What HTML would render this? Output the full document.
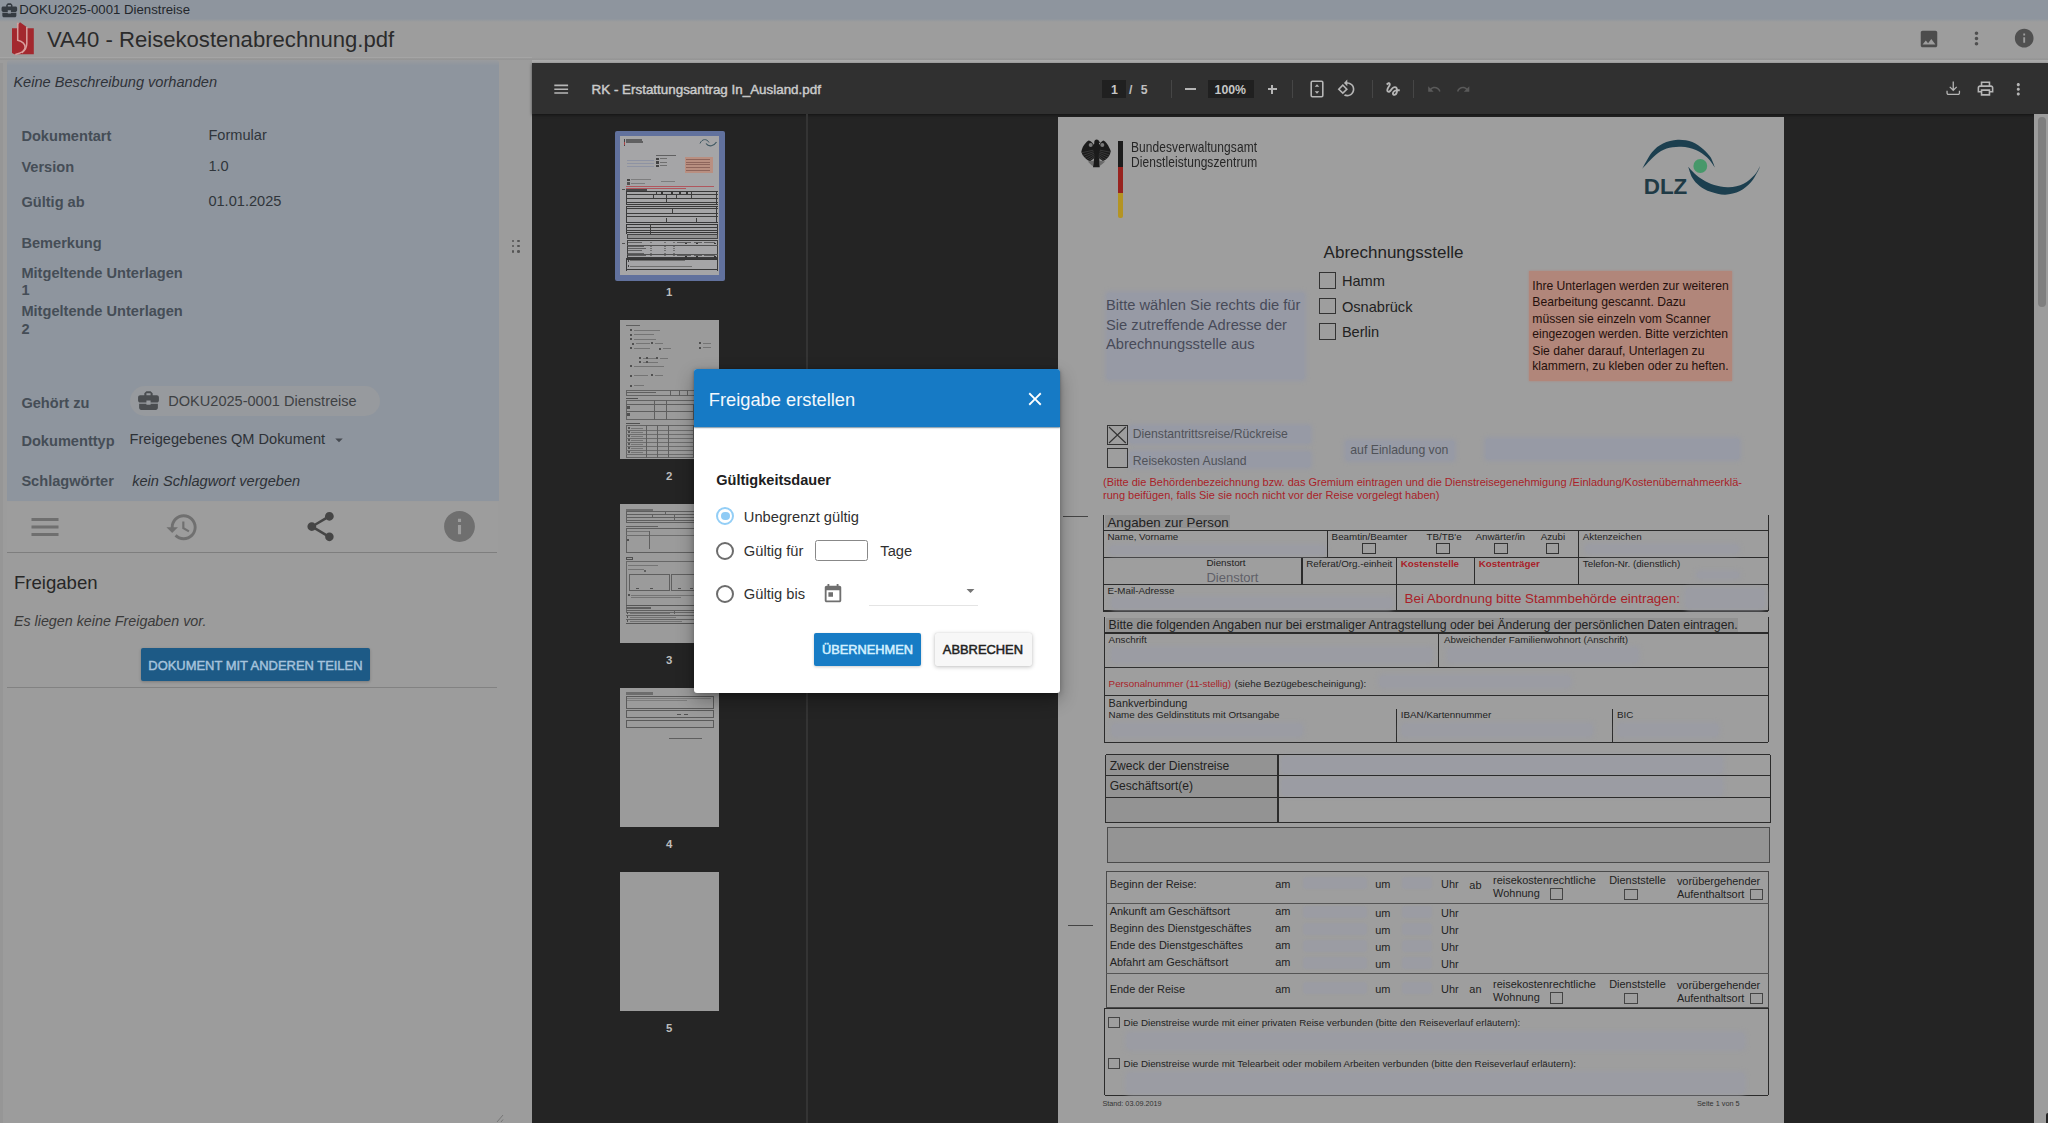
<!DOCTYPE html>
<html lang="de"><head><meta charset="utf-8"><title>VA40 - Reisekostenabrechnung.pdf</title>
<style>
html,body{margin:0;padding:0;}
body{width:2048px;height:1123px;overflow:hidden;position:relative;background:#9e9e9e;font-family:"Liberation Sans",sans-serif;}
.r{position:absolute;display:block;}
.t{position:absolute;white-space:nowrap;line-height:1;}
</style></head><body>

<!-- app chrome -->
<div class="r" style="left:0.0px;top:0.0px;width:2048.0px;height:22.0px;background:linear-gradient(#8e959e 0,#8e959e 18.800px,#9d9d9d 22px);"></div>
<svg class="r" style="left:-0.4px;top:0.6px;" width="18.7" height="18.7" viewBox="0 0 24 24"><path d="M10 16v-1H3.01L3 19c0 1.11.89 2 2 2h14c1.11 0 2-.89 2-2v-4h-7v1h-4zm10-9h-4.01V5l-2-2h-4l-2 2v2H4c-1.1 0-2 .9-2 2v3c0 1.11.89 2 2 2h6v-2h4v2h6c1.1 0 2-.9 2-2V9c0-1.1-.9-2-2-2zm-6 0h-4V5h4v2z" fill="#353b42"/></svg>
<div class="t" style="left:19.2px;top:3px;font-size:13.2px;color:#23272c;">DOKU2025-0001 Dienstreise</div>
<div class="r" style="left:0.0px;top:22.0px;width:2048.0px;height:38.0px;background:#9d9d9d;"></div>
<div class="r" style="left:532.0px;top:59.8px;width:1516.0px;height:3.2px;background:#acacac;"></div>
<div class="r" style="left:0.0px;top:57.4px;width:532.0px;height:1.1px;background:#a5a5a5;"></div>
<div class="r" style="left:0.0px;top:60.0px;width:532.0px;height:3.0px;background:#9c9c9c;"></div>
<div class="r" style="left:0.0px;top:58.4px;width:2048.0px;height:1.5px;background:linear-gradient(#9a9a9a,#949494);"></div>
<svg class="r" style="left:10px;top:20px" width="26" height="37" viewBox="10 20 26 37">
<path d="M12 28.200H18.200V24.600L20 22.300L26.300 26.800V28.200H33.800V54.200H14.500L12 53.100Z" fill="#a3282e"/>
<path d="M17.700 22.800V40.300C22.300 41.600 25.100 44 25.100 47.300C25.100 50.800 21 53.300 15.300 54.500" fill="none" stroke="#d9a09e" stroke-width="1.500"/>
<path d="M26.800 27V43.500C26.800 47.500 25 50.500 21.800 52.800" fill="none" stroke="#d9a09e" stroke-width="1.500"/>
</svg>
<div class="t" style="left:47.0px;top:29px;font-size:22.1px;color:#2b2b2b;">VA40 - Reisekostenabrechnung.pdf</div>
<svg class="r" style="left:1918.3px;top:27.5px;" width="22" height="22" viewBox="0 0 24 24"><path d="M21 19V5c0-1.1-.9-2-2-2H5c-1.1 0-2 .9-2 2v14c0 1.1.9 2 2 2h14c1.1 0 2-.9 2-2zM8.5 13.5l2.5 3.01L14.5 12l4.5 6H5l3.5-4.5z" fill="#4c4c4c"/></svg>
<svg class="r" style="left:1966.0px;top:28.0px;" width="21" height="21" viewBox="0 0 24 24"><path d="M12 8c1.1 0 2-.9 2-2s-.9-2-2-2-2 .9-2 2 .9 2 2 2zm0 2c-1.1 0-2 .9-2 2s.9 2 2 2 2-.9 2-2-.9-2-2-2zm0 6c-1.1 0-2 .9-2 2s.9 2 2 2 2-.9 2-2-.9-2-2-2z" fill="#4f4f4f"/></svg>
<svg class="r" style="left:2013.0px;top:27.3px;" width="22.4" height="22.4" viewBox="0 0 24 24"><path d="M12 2C6.48 2 2 6.48 2 12s4.48 10 10 10 10-4.48 10-10S17.52 2 12 2zm1 15h-2v-6h2v6zm0-8h-2V7h2v2z" fill="#505050"/></svg>
<!-- left panel -->
<div class="r" style="left:0.0px;top:63.0px;width:532.0px;height:1060.0px;background:#9c9c9c;"></div>
<div class="r" style="left:0.0px;top:63.0px;width:3.0px;height:1060.0px;background:#969696;"></div>
<div class="r" style="left:498.0px;top:63.0px;width:34.0px;height:1060.0px;background:#9c9c9c;"></div>
<div class="r" style="left:7.0px;top:60.4px;width:491.5px;height:441.1px;background:linear-gradient(#999b9e 0,#8e959e 5.500px);border-radius:3px 3px 0 0;"></div>
<div class="t" style="left:13.4px;top:75px;font-size:14.6px;color:#2e3238;font-style:italic;">Keine Beschreibung vorhanden</div>
<div class="t" style="left:21.4px;top:129px;font-size:14.6px;color:#454d56;font-weight:700;">Dokumentart</div>
<div class="t" style="left:208.4px;top:128px;font-size:14.6px;color:#30353b;">Formular</div>
<div class="t" style="left:21.4px;top:160px;font-size:14.6px;color:#454d56;font-weight:700;">Version</div>
<div class="t" style="left:208.4px;top:159px;font-size:14.6px;color:#30353b;">1.0</div>
<div class="t" style="left:21.4px;top:195px;font-size:14.6px;color:#454d56;font-weight:700;">Gültig ab</div>
<div class="t" style="left:208.4px;top:194px;font-size:14.6px;color:#30353b;">01.01.2025</div>
<div class="t" style="left:21.4px;top:236px;font-size:14.6px;color:#454d56;font-weight:700;">Bemerkung</div>
<div class="t" style="left:21.4px;top:266px;font-size:14.6px;color:#454d56;font-weight:700;">Mitgeltende Unterlagen</div>
<div class="t" style="left:21.4px;top:283px;font-size:14.6px;color:#454d56;font-weight:700;">1</div>
<div class="t" style="left:21.4px;top:304px;font-size:14.6px;color:#454d56;font-weight:700;">Mitgeltende Unterlagen</div>
<div class="t" style="left:21.4px;top:322px;font-size:14.6px;color:#454d56;font-weight:700;">2</div>
<div class="t" style="left:21.4px;top:396px;font-size:14.6px;color:#454d56;font-weight:700;">Gehört zu</div>
<div class="r" style="left:130.0px;top:386.0px;width:249.5px;height:29.5px;background:#979a9e;border-radius:15px;"></div>
<svg class="r" style="left:135.5px;top:388.0px;" width="25" height="25" viewBox="0 0 24 24"><path d="M10 16v-1H3.01L3 19c0 1.11.89 2 2 2h14c1.11 0 2-.89 2-2v-4h-7v1h-4zm10-9h-4.01V5l-2-2h-4l-2 2v2H4c-1.1 0-2 .9-2 2v3c0 1.11.89 2 2 2h6v-2h4v2h6c1.1 0 2-.9 2-2V9c0-1.1-.9-2-2-2zm-6 0h-4V5h4v2z" fill="#4a4d50"/></svg>
<div class="t" style="left:168.3px;top:394px;font-size:14.55px;color:#3e4144;">DOKU2025-0001 Dienstreise</div>
<div class="t" style="left:21.4px;top:434px;font-size:14.6px;color:#454d56;font-weight:700;">Dokumenttyp</div>
<div class="t" style="left:129.6px;top:432px;font-size:14.6px;color:#2d3136;">Freigegebenes QM Dokument</div>
<svg class="r" style="left:329.6px;top:431.4px;" width="18" height="18" viewBox="0 0 24 24"><path d="M7 10l5 5 5-5z" fill="#464b51"/></svg>
<div class="t" style="left:21.4px;top:474px;font-size:14.6px;color:#454d56;font-weight:700;">Schlagwörter</div>
<div class="t" style="left:132.2px;top:474px;font-size:14.6px;color:#2d3136;font-style:italic;">kein Schlagwort vergeben</div>
<div class="r" style="left:7.0px;top:501.5px;width:491.0px;height:50.5px;background:#9d9d9d;"></div>
<svg class="r" style="left:27.0px;top:508.5px;" width="36" height="36" viewBox="0 0 24 24"><path d="M3 18h18v-2H3v2zm0-5h18v-2H3v2zm0-7v2h18V6H3z" fill="#6f6f6f"/></svg>
<svg class="r" style="left:165.3px;top:509.5px;" width="34.5" height="34.5" viewBox="0 0 24 24"><path d="M13 3c-4.97 0-9 4.03-9 9H1l3.89 3.89.07.14L9 12H6c0-3.87 3.13-7 7-7s7 3.13 7 7-3.13 7-7 7c-1.93 0-3.68-.79-4.94-2.06l-1.42 1.42C8.27 19.99 10.51 21 13 21c4.97 0 9-4.03 9-9s-4.03-9-9-9zm-1 5v5l4.28 2.54.72-1.21-3.5-2.08V8H12z" fill="#707070"/></svg>
<svg class="r" style="left:303.4px;top:509.2px;" width="35.2" height="35.2" viewBox="0 0 24 24"><path d="M18 16.08c-.76 0-1.44.3-1.96.77L8.91 12.7c.05-.23.09-.46.09-.7s-.04-.47-.09-.7l7.05-4.11c.54.5 1.25.81 2.04.81 1.66 0 3-1.34 3-3s-1.34-3-3-3-3 1.34-3 3c0 .24.04.47.09.7L8.04 9.81C7.5 9.31 6.79 9 6 9c-1.66 0-3 1.34-3 3s1.34 3 3 3c.79 0 1.5-.31 2.04-.81l7.12 4.16c-.05.21-.08.43-.08.65 0 1.61 1.31 2.92 2.92 2.92 1.61 0 2.92-1.31 2.92-2.92s-1.31-2.92-2.92-2.92z" fill="#454545"/></svg>
<svg class="r" style="left:440.5px;top:508.4px;" width="37" height="37" viewBox="0 0 24 24"><path d="M12 2C6.48 2 2 6.48 2 12s4.48 10 10 10 10-4.48 10-10S17.52 2 12 2zm1 15h-2v-6h2v6zm0-8h-2V7h2v2z" fill="#6f6f6f"/></svg>
<div class="r" style="left:7.0px;top:551.8px;width:489.5px;height:1.6px;background:#7e7e7e;"></div>
<div class="r" style="left:7.0px;top:553.4px;width:491.0px;height:133.0px;background:#9c9c9c;"></div>
<div class="t" style="left:13.9px;top:574px;font-size:18.6px;color:#272727;">Freigaben</div>
<div class="t" style="left:13.9px;top:614px;font-size:14.3px;color:#3a3a3a;font-style:italic;">Es liegen keine Freigaben vor.</div>
<div class="r" style="left:141.0px;top:648.2px;width:229.3px;height:32.6px;background:#1d5a86;border-radius:2px;box-shadow:0 1px 3px rgba(0,0,0,.22);"></div>
<div class="t" style="left:148.3px;top:660px;font-size:12.95px;color:#a6c3dc;-webkit-text-stroke:0.45px #a6c3dc;">DOKUMENT MIT ANDEREN TEILEN</div>
<div class="r" style="left:7.0px;top:686.7px;width:489.5px;height:1.7px;background:#828282;"></div>
<div class="r" style="left:511.6px;top:239.6px;width:2.7px;height:2.7px;background:#555;border-radius:50%;"></div>
<div class="r" style="left:516.9px;top:239.6px;width:2.7px;height:2.7px;background:#555;border-radius:50%;"></div>
<div class="r" style="left:511.6px;top:244.8px;width:2.7px;height:2.7px;background:#555;border-radius:50%;"></div>
<div class="r" style="left:516.9px;top:244.8px;width:2.7px;height:2.7px;background:#555;border-radius:50%;"></div>
<div class="r" style="left:511.6px;top:250.0px;width:2.7px;height:2.7px;background:#555;border-radius:50%;"></div>
<div class="r" style="left:516.9px;top:250.0px;width:2.7px;height:2.7px;background:#555;border-radius:50%;"></div>
<svg class="r" style="left:494px;top:1112px" width="12" height="11" viewBox="0 0 12 11"><path d="M3 10L9 3M7 10L9 7.500" stroke="#777" stroke-width="1" fill="none"/></svg>
<!-- pdf viewer shell -->
<div class="r" style="left:532.0px;top:63.0px;width:1516.0px;height:1060.0px;background:#242424;"></div>
<div class="r" style="left:532.0px;top:63.0px;width:1516.0px;height:51.0px;background:#303030;box-shadow:0 1px 3px rgba(0,0,0,.5);"></div>
<svg class="r" style="left:552.2px;top:79.5px;" width="18.4" height="18.4" viewBox="0 0 24 24"><path d="M3 18h18v-2H3v2zm0-5h18v-2H3v2zm0-7v2h18V6H3z" fill="#b6b6b6"/></svg>
<div class="t" style="left:591.6px;top:83px;font-size:13.4px;color:#cbcbcb;-webkit-text-stroke:0.45px #cbcbcb;">RK - Erstattungsantrag In_Ausland.pdf</div>
<div class="r" style="left:1102.0px;top:80.2px;width:24.3px;height:17.6px;background:#202020;"></div>
<div class="t" style="left:1111.0px;top:84px;font-size:12.3px;color:#c6c6c6;font-weight:700;">1</div>
<div class="t" style="left:1129.0px;top:84px;font-size:12.3px;color:#c0c0c0;font-weight:700;">/</div>
<div class="t" style="left:1140.8px;top:84px;font-size:12.3px;color:#c0c0c0;font-weight:700;">5</div>
<div class="r" style="left:1171.0px;top:80.0px;width:1.0px;height:18.0px;background:#464646;"></div>
<div class="r" style="left:1185.0px;top:88.3px;width:10.5px;height:1.8px;background:#b5b5b5;"></div>
<div class="r" style="left:1208.4px;top:80.2px;width:46.0px;height:17.6px;background:#202020;"></div>
<div class="t" style="left:1214.6px;top:84px;font-size:12.3px;color:#c6c6c6;font-weight:700;">100%</div>
<div class="r" style="left:1267.6px;top:88.3px;width:9.4px;height:1.8px;background:#b5b5b5;"></div>
<div class="r" style="left:1271.4px;top:84.5px;width:1.8px;height:9.4px;background:#b5b5b5;"></div>
<div class="r" style="left:1292.0px;top:80.0px;width:1.0px;height:18.0px;background:#464646;"></div>
<svg class="r" style="left:1309px;top:80px" width="16" height="18" viewBox="0 0 16 18"><rect x="2.200" y="1.300" width="11.600" height="15.400" rx="1.200" fill="none" stroke="#b6b6b6" stroke-width="1.600"/><path d="M8 4.200l2.300 2.600H5.700zM8 13.800l2.300-2.600H5.700z" fill="#b6b6b6"/></svg>
<svg class="r" style="left:1337.0px;top:79.2px;" width="19" height="19" viewBox="0 0 24 24"><path d="M7.34 6.41L.86 12.9l6.49 6.48 6.49-6.48-6.5-6.49zM3.69 12.9l3.66-3.66L11 12.9l-3.66 3.66-3.65-3.66zm15.67-6.26C17.61 4.88 15.3 4 13 4V.76L8.76 5 13 9.24V6c1.79 0 3.58.68 4.95 2.05 2.73 2.73 2.73 7.17 0 9.9C16.58 19.32 14.79 20 13 20c-.97 0-1.94-.21-2.84-.61l-1.49 1.49C10.02 21.62 11.51 22 13 22c2.3 0 4.61-.88 6.36-2.64 3.52-3.51 3.52-9.21 0-12.72z" fill="#b6b6b6"/></svg>
<div class="r" style="left:1372.0px;top:80.0px;width:1.0px;height:18.0px;background:#464646;"></div>
<svg class="r" style="left:1383.5px;top:79.6px;" width="18" height="18" viewBox="0 0 24 24"><path d="M4.59 6.89c.7-.71 1.4-1.35 1.71-1.22.5.2 0 1.03-.3 1.52-.25.42-2.86 3.89-2.86 6.31 0 1.28.48 2.34 1.34 2.98.75.56 1.74.73 2.64.46 1.07-.31 1.95-1.4 3.06-2.77 1.21-1.49 2.83-3.44 4.08-3.44 1.63 0 1.65 1.01 1.76 1.79-3.78.64-5.38 3.67-5.38 5.37 0 1.7 1.44 3.09 3.21 3.09 1.63 0 4.29-1.33 4.69-6.1H21v-2.5h-2.47c-.15-1.65-1.09-4.2-4.03-4.2-2.25 0-4.18 1.91-4.94 2.84-.58.73-2.06 2.48-2.29 2.72-.25.3-.68.84-1.11.84-.45 0-.72-.83-.36-1.92.35-1.09 1.4-2.86 1.85-3.52.78-1.14 1.3-1.92 1.3-3.28C8.95 3.69 7.31 3 6.44 3 5.12 3 3.97 4 3.72 4.25c-.36.36-.66.66-.88.93l1.75 1.71zm9.29 11.66c-.31 0-.74-.26-.74-.72 0-.6.73-2.2 2.87-2.76-.3 2.69-1.43 3.48-2.13 3.48z" fill="#b6b6b6"/></svg>
<div class="r" style="left:1413.3px;top:80.0px;width:1.0px;height:18.0px;background:#464646;"></div>
<svg class="r" style="left:1427.4px;top:82.0px;" width="14.5" height="14.5" viewBox="0 0 24 24"><path d="M12.5 8c-2.65 0-5.05.99-6.9 2.6L2 7v9h9l-3.62-3.62c1.39-1.16 3.16-1.88 5.12-1.88 3.54 0 6.55 2.31 7.6 5.5l2.37-.78C21.08 11.03 17.15 8 12.5 8z" fill="#5a5a5a"/></svg>
<svg class="r" style="left:1456.4px;top:82.0px;" width="14.5" height="14.5" viewBox="0 0 24 24"><path d="M18.4 10.6C16.55 8.99 14.15 8 11.5 8c-4.65 0-8.58 3.03-9.96 7.22L3.9 16c1.05-3.19 4.05-5.5 7.6-5.5 1.95 0 3.73.72 5.12 1.88L13 16h9V7l-3.6 3.6z" fill="#5a5a5a"/></svg>
<svg class="r" style="left:1942.6px;top:78.2px;" width="20.5" height="20.5" viewBox="0 0 24 24"><path d="M12 15.575l-4.6-4.6 1.05-1.05L11.250 12.700V4h1.500v8.700l2.800-2.775 1.050 1.050zM6.300 20q-.950 0-1.625-.675T4 17.700V15h1.500v2.700q0 .300.250.550t.550.250h11.400q.300 0 .550-.250t.250-.550V15H20v2.700q0 .950-.675 1.625T17.700 20z" fill="#b6b6b6"/></svg>
<svg class="r" style="left:1976.2px;top:79.2px;" width="19" height="19" viewBox="0 0 24 24"><path d="M19 8h-1V3H6v5H5c-1.66 0-3 1.34-3 3v6h4v4h12v-4h4v-6c0-1.66-1.34-3-3-3zM8 5h8v3H8V5zm8 12v2H8v-4h8v2zm2-2v-2H6v2H4v-4c0-.55.45-1 1-1h14c.55 0 1 .45 1 1v4h-2z" fill="#b6b6b6"/></svg>
<svg class="r" style="left:2009.4px;top:79.5px;" width="18.6" height="18.6" viewBox="0 0 24 24"><path d="M12 8c1.1 0 2-.9 2-2s-.9-2-2-2-2 .9-2 2 .9 2 2 2zm0 2c-1.1 0-2 .9-2 2s.9 2 2 2 2-.9 2-2-.9-2-2-2zm0 6c-1.1 0-2 .9-2 2s.9 2 2 2 2-.9 2-2-.9-2-2-2z" fill="#b6b6b6"/></svg>
<div class="r" style="left:806.3px;top:114.0px;width:1.4px;height:1009.0px;background:#343434;"></div>
<div class="r" style="left:2033.6px;top:114.0px;width:14.4px;height:1009.0px;background:#9c9c9c;"></div>
<div class="r" style="left:2037.8px;top:117.0px;width:8.0px;height:189.6px;background:#7f7f7f;border-radius:4px;"></div>
<div class="r" style="left:2046.0px;top:1113.0px;width:2.0px;height:10.0px;background:#242424;border-radius:10px 0 0 0;"></div>
<!-- thumbnails -->
<div class="r" style="left:614.5px;top:130.7px;width:110.3px;height:150.0px;background:#61719d;border-radius:2px;"></div>
<div class="r" style="left:620.0px;top:136.2px;width:99.4px;height:139.0px;background:#a5a5a7;"></div>
<div class="t" style="left:666.1px;top:287px;font-size:11.4px;color:#bdbdbd;font-weight:700;">1</div>
<div class="r" style="left:620.0px;top:320.0px;width:99.4px;height:139.0px;background:#9b9b9b;"></div>
<div class="t" style="left:666.1px;top:471px;font-size:11.4px;color:#bdbdbd;font-weight:700;">2</div>
<div class="r" style="left:620.0px;top:503.7px;width:99.4px;height:139.0px;background:#9b9b9b;"></div>
<div class="t" style="left:666.1px;top:655px;font-size:11.4px;color:#bdbdbd;font-weight:700;">3</div>
<div class="r" style="left:620.0px;top:687.7px;width:99.4px;height:139.0px;background:#9b9b9b;"></div>
<div class="t" style="left:666.1px;top:839px;font-size:11.4px;color:#bdbdbd;font-weight:700;">4</div>
<div class="r" style="left:620.0px;top:871.6px;width:99.4px;height:139.0px;background:#9b9b9b;"></div>
<div class="t" style="left:666.1px;top:1023px;font-size:11.4px;color:#bdbdbd;font-weight:700;">5</div>
<div class="r" style="left:0;top:0;width:2048px;height:1123px;filter:blur(.5px);opacity:.85">
<div class="r" style="left:623.5px;top:139.0px;width:1.5px;height:7.0px;background:#333;"></div>
<div class="r" style="left:623.5px;top:142.2px;width:1.5px;height:3.0px;background:#a33;"></div>
<div class="r" style="left:626.0px;top:139.4px;width:16.0px;height:1.2px;background:#555;"></div>
<div class="r" style="left:626.0px;top:141.4px;width:17.0px;height:1.2px;background:#555;"></div>
<svg class="r" style="left:699px;top:138.2px" width="18" height="10" viewBox="0 0 18 10"><path d="M1 5.500C3 0.500 8 0.500 10 4.500" stroke="#2d4a55" stroke-width="1" fill="none"/><path d="M7 5.500C10 9.500 15 8 17.500 4" stroke="#2d4a55" stroke-width="1.200" fill="none"/></svg>
<div class="r" style="left:656.0px;top:154.7px;width:20.0px;height:1.1px;background:#555;"></div>
<div class="r" style="left:656.0px;top:157.7px;width:2.5px;height:2.5px;background:#333;"></div>
<div class="r" style="left:659.5px;top:158.2px;width:7.0px;height:1.0px;background:#666;"></div>
<div class="r" style="left:656.0px;top:161.2px;width:2.5px;height:2.5px;background:#333;"></div>
<div class="r" style="left:659.5px;top:161.7px;width:7.0px;height:1.0px;background:#666;"></div>
<div class="r" style="left:656.0px;top:164.7px;width:2.5px;height:2.5px;background:#333;"></div>
<div class="r" style="left:659.5px;top:165.2px;width:7.0px;height:1.0px;background:#666;"></div>
<div class="r" style="left:627.0px;top:160.2px;width:27.0px;height:1.2px;background:#8a90a3;"></div>
<div class="r" style="left:627.0px;top:163.0px;width:27.0px;height:1.2px;background:#8a90a3;"></div>
<div class="r" style="left:627.0px;top:165.8px;width:27.0px;height:1.2px;background:#8a90a3;"></div>
<div class="r" style="left:684.5px;top:157.2px;width:28.0px;height:15.5px;background:#bd8c7b;"></div>
<div class="r" style="left:686.0px;top:159.2px;width:24.0px;height:0.9px;background:#8a5a50;"></div>
<div class="r" style="left:686.0px;top:161.8px;width:24.0px;height:0.9px;background:#8a5a50;"></div>
<div class="r" style="left:686.0px;top:164.4px;width:24.0px;height:0.9px;background:#8a5a50;"></div>
<div class="r" style="left:686.0px;top:167.0px;width:24.0px;height:0.9px;background:#8a5a50;"></div>
<div class="r" style="left:686.0px;top:169.6px;width:24.0px;height:0.9px;background:#8a5a50;"></div>
<div class="r" style="left:627.0px;top:178.7px;width:3.0px;height:2.8px;background:#333;"></div>
<div class="r" style="left:627.0px;top:182.0px;width:3.0px;height:2.8px;background:#444;"></div>
<div class="r" style="left:631.0px;top:179.2px;width:20.0px;height:1.0px;background:#777;"></div>
<div class="r" style="left:631.0px;top:182.7px;width:14.0px;height:1.0px;background:#777;"></div>
<div class="r" style="left:661.0px;top:181.0px;width:14.0px;height:1.0px;background:#777;"></div>
<div class="r" style="left:626.0px;top:186.2px;width:88.0px;height:0.9px;background:#b34a52;"></div>
<div class="r" style="left:626.0px;top:188.0px;width:60.0px;height:0.9px;background:#b34a52;"></div>
<div class="r" style="left:622.0px;top:189.0px;width:3.0px;height:0.8px;background:#444;"></div>
<div class="r" style="left:622.0px;top:243.2px;width:3.0px;height:0.8px;background:#444;"></div>
<div class="r" style="left:626.0px;top:189.2px;width:21.0px;height:1.5px;background:#3a3a3a;"></div>
<div class="r" style="left:626.0px;top:190.7px;width:91.5px;height:1.1px;background:#262626;"></div>
<div class="r" style="left:626.0px;top:203.6px;width:91.5px;height:1.1px;background:#262626;"></div>
<div class="r" style="left:626.0px;top:190.7px;width:1.1px;height:14.3px;background:#262626;"></div>
<div class="r" style="left:716.4px;top:190.7px;width:1.1px;height:14.3px;background:#262626;"></div>
<div class="r" style="left:626.0px;top:194.3px;width:91.5px;height:1.0px;background:#2a2a2a;"></div>
<div class="r" style="left:626.0px;top:197.9px;width:91.5px;height:1.0px;background:#2a2a2a;"></div>
<div class="r" style="left:626.0px;top:201.5px;width:91.5px;height:1.0px;background:#2a2a2a;"></div>
<div class="r" style="left:656.0px;top:190.7px;width:1.0px;height:4.0px;background:#2a2a2a;"></div>
<div class="r" style="left:691.0px;top:190.7px;width:1.0px;height:7.5px;background:#2a2a2a;"></div>
<div class="r" style="left:653.0px;top:194.6px;width:1.0px;height:3.5px;background:#2a2a2a;"></div>
<div class="r" style="left:666.0px;top:194.6px;width:1.0px;height:7.0px;background:#2a2a2a;"></div>
<div class="r" style="left:676.0px;top:194.6px;width:1.0px;height:3.5px;background:#2a2a2a;"></div>
<div class="r" style="left:661.0px;top:192.0px;width:2.0px;height:2.0px;background:#222;"></div>
<div class="r" style="left:671.0px;top:192.0px;width:2.0px;height:2.0px;background:#222;"></div>
<div class="r" style="left:679.0px;top:192.0px;width:2.0px;height:2.0px;background:#222;"></div>
<div class="r" style="left:686.0px;top:192.0px;width:2.0px;height:2.0px;background:#222;"></div>
<div class="r" style="left:626.0px;top:203.9px;width:91.5px;height:1.2px;background:#2a2a2a;"></div>
<div class="r" style="left:626.0px;top:205.9px;width:91.5px;height:1.1px;background:#262626;"></div>
<div class="r" style="left:626.0px;top:221.9px;width:91.5px;height:1.1px;background:#262626;"></div>
<div class="r" style="left:626.0px;top:205.9px;width:1.1px;height:17.5px;background:#262626;"></div>
<div class="r" style="left:716.4px;top:205.9px;width:1.1px;height:17.5px;background:#262626;"></div>
<div class="r" style="left:626.0px;top:208.0px;width:91.5px;height:0.9px;background:#2a2a2a;"></div>
<div class="r" style="left:626.0px;top:212.6px;width:91.5px;height:1.0px;background:#2a2a2a;"></div>
<div class="r" style="left:626.0px;top:216.3px;width:91.5px;height:1.0px;background:#2a2a2a;"></div>
<div class="r" style="left:672.0px;top:208.0px;width:1.0px;height:4.7px;background:#2a2a2a;"></div>
<div class="r" style="left:666.0px;top:217.6px;width:1.0px;height:5.5px;background:#2a2a2a;"></div>
<div class="r" style="left:695.5px;top:217.6px;width:1.0px;height:5.5px;background:#2a2a2a;"></div>
<div class="r" style="left:626.3px;top:224.3px;width:91.5px;height:1.2px;background:#222;"></div>
<div class="r" style="left:626.3px;top:232.3px;width:91.5px;height:1.2px;background:#222;"></div>
<div class="r" style="left:626.3px;top:224.3px;width:1.2px;height:9.4px;background:#222;"></div>
<div class="r" style="left:716.6px;top:224.3px;width:1.2px;height:9.4px;background:#222;"></div>
<div class="r" style="left:626.3px;top:227.1px;width:91.5px;height:1.0px;background:#2a2a2a;"></div>
<div class="r" style="left:626.3px;top:230.1px;width:91.5px;height:1.0px;background:#2a2a2a;"></div>
<div class="r" style="left:650.0px;top:224.3px;width:1.0px;height:9.4px;background:#2a2a2a;"></div>
<div class="r" style="left:626.5px;top:234.2px;width:91.0px;height:1.0px;background:#333;"></div>
<div class="r" style="left:626.5px;top:238.1px;width:91.0px;height:1.0px;background:#333;"></div>
<div class="r" style="left:626.5px;top:234.2px;width:1.0px;height:5.0px;background:#333;"></div>
<div class="r" style="left:716.5px;top:234.2px;width:1.0px;height:5.0px;background:#333;"></div>
<div class="r" style="left:627.5px;top:235.1px;width:89.0px;height:3.0px;background:#8e8e8e;"></div>
<div class="r" style="left:626.5px;top:240.1px;width:91.0px;height:1.0px;background:#2a2a2a;"></div>
<div class="r" style="left:626.5px;top:257.3px;width:91.0px;height:1.0px;background:#2a2a2a;"></div>
<div class="r" style="left:626.5px;top:240.1px;width:1.0px;height:18.5px;background:#2a2a2a;"></div>
<div class="r" style="left:716.5px;top:240.1px;width:1.0px;height:18.5px;background:#2a2a2a;"></div>
<div class="r" style="left:626.5px;top:244.5px;width:91.0px;height:0.8px;background:#444;"></div>
<div class="r" style="left:626.5px;top:253.9px;width:91.0px;height:0.8px;background:#444;"></div>
<div class="r" style="left:628.0px;top:241.6px;width:14.0px;height:0.9px;background:#555;"></div>
<div class="r" style="left:650.0px;top:241.6px;width:2.0px;height:0.9px;background:#666;"></div>
<div class="r" style="left:664.0px;top:241.6px;width:2.0px;height:0.9px;background:#666;"></div>
<div class="r" style="left:673.0px;top:241.6px;width:2.0px;height:0.9px;background:#666;"></div>
<div class="r" style="left:628.0px;top:245.7px;width:16.0px;height:0.9px;background:#555;"></div>
<div class="r" style="left:650.0px;top:245.7px;width:2.0px;height:0.9px;background:#666;"></div>
<div class="r" style="left:664.0px;top:245.7px;width:2.0px;height:0.9px;background:#666;"></div>
<div class="r" style="left:673.0px;top:245.7px;width:2.0px;height:0.9px;background:#666;"></div>
<div class="r" style="left:628.0px;top:248.1px;width:18.0px;height:0.9px;background:#555;"></div>
<div class="r" style="left:650.0px;top:248.1px;width:2.0px;height:0.9px;background:#666;"></div>
<div class="r" style="left:664.0px;top:248.1px;width:2.0px;height:0.9px;background:#666;"></div>
<div class="r" style="left:673.0px;top:248.1px;width:2.0px;height:0.9px;background:#666;"></div>
<div class="r" style="left:628.0px;top:250.4px;width:14.0px;height:0.9px;background:#555;"></div>
<div class="r" style="left:650.0px;top:250.4px;width:2.0px;height:0.9px;background:#666;"></div>
<div class="r" style="left:664.0px;top:250.4px;width:2.0px;height:0.9px;background:#666;"></div>
<div class="r" style="left:673.0px;top:250.4px;width:2.0px;height:0.9px;background:#666;"></div>
<div class="r" style="left:628.0px;top:252.7px;width:16.0px;height:0.9px;background:#555;"></div>
<div class="r" style="left:650.0px;top:252.7px;width:2.0px;height:0.9px;background:#666;"></div>
<div class="r" style="left:664.0px;top:252.7px;width:2.0px;height:0.9px;background:#666;"></div>
<div class="r" style="left:673.0px;top:252.7px;width:2.0px;height:0.9px;background:#666;"></div>
<div class="r" style="left:628.0px;top:255.3px;width:18.0px;height:0.9px;background:#555;"></div>
<div class="r" style="left:650.0px;top:255.3px;width:2.0px;height:0.9px;background:#666;"></div>
<div class="r" style="left:664.0px;top:255.3px;width:2.0px;height:0.9px;background:#666;"></div>
<div class="r" style="left:673.0px;top:255.3px;width:2.0px;height:0.9px;background:#666;"></div>
<div class="r" style="left:677.0px;top:241.6px;width:14.0px;height:0.8px;background:#555;"></div>
<div class="r" style="left:694.0px;top:241.6px;width:8.0px;height:0.8px;background:#555;"></div>
<div class="r" style="left:704.0px;top:241.6px;width:11.0px;height:0.8px;background:#555;"></div>
<div class="r" style="left:684.5px;top:242.6px;width:2.0px;height:1.8px;background:#222;"></div>
<div class="r" style="left:695.5px;top:242.6px;width:2.0px;height:1.8px;background:#222;"></div>
<div class="r" style="left:714.0px;top:242.6px;width:2.0px;height:1.8px;background:#222;"></div>
<div class="r" style="left:677.0px;top:254.8px;width:14.0px;height:0.8px;background:#555;"></div>
<div class="r" style="left:694.0px;top:254.8px;width:8.0px;height:0.8px;background:#555;"></div>
<div class="r" style="left:704.0px;top:254.8px;width:11.0px;height:0.8px;background:#555;"></div>
<div class="r" style="left:684.5px;top:255.8px;width:2.0px;height:1.8px;background:#222;"></div>
<div class="r" style="left:695.5px;top:255.8px;width:2.0px;height:1.8px;background:#222;"></div>
<div class="r" style="left:714.0px;top:255.8px;width:2.0px;height:1.8px;background:#222;"></div>
<div class="r" style="left:626.3px;top:258.3px;width:91.5px;height:1.3px;background:#222;"></div>
<div class="r" style="left:626.3px;top:258.3px;width:91.5px;height:1.1px;background:#262626;"></div>
<div class="r" style="left:626.3px;top:269.2px;width:91.5px;height:1.1px;background:#262626;"></div>
<div class="r" style="left:626.3px;top:258.3px;width:1.1px;height:12.3px;background:#262626;"></div>
<div class="r" style="left:716.7px;top:258.3px;width:1.1px;height:12.3px;background:#262626;"></div>
<div class="r" style="left:627.5px;top:260.0px;width:1.8px;height:1.8px;background:#333;"></div>
<div class="r" style="left:630.0px;top:260.4px;width:55.0px;height:0.9px;background:#666;"></div>
<div class="r" style="left:627.5px;top:265.4px;width:1.8px;height:1.8px;background:#333;"></div>
<div class="r" style="left:630.0px;top:265.8px;width:62.0px;height:0.9px;background:#666;"></div>
<div class="r" style="left:625.5px;top:324.5px;width:14.0px;height:0.9px;background:#555;"></div>
<div class="r" style="left:630.0px;top:329.0px;width:2.0px;height:2.0px;background:#444;"></div>
<div class="r" style="left:634.0px;top:329.5px;width:26.0px;height:0.9px;background:#6e6e6e;"></div>
<div class="r" style="left:630.0px;top:333.5px;width:2.0px;height:2.0px;background:#444;"></div>
<div class="r" style="left:634.0px;top:334.0px;width:20.0px;height:0.9px;background:#6e6e6e;"></div>
<div class="r" style="left:630.0px;top:338.0px;width:2.0px;height:2.0px;background:#444;"></div>
<div class="r" style="left:634.0px;top:338.5px;width:22.0px;height:0.9px;background:#6e6e6e;"></div>
<div class="r" style="left:632.0px;top:342.5px;width:2.0px;height:2.0px;background:#444;"></div>
<div class="r" style="left:636.0px;top:343.0px;width:14.0px;height:0.9px;background:#6e6e6e;"></div>
<div class="r" style="left:630.0px;top:347.0px;width:2.0px;height:2.0px;background:#444;"></div>
<div class="r" style="left:634.0px;top:347.5px;width:16.0px;height:0.9px;background:#6e6e6e;"></div>
<div class="r" style="left:630.0px;top:365.0px;width:2.0px;height:2.0px;background:#444;"></div>
<div class="r" style="left:634.0px;top:365.5px;width:30.0px;height:0.9px;background:#6e6e6e;"></div>
<div class="r" style="left:630.0px;top:374.5px;width:2.0px;height:2.0px;background:#444;"></div>
<div class="r" style="left:634.0px;top:375.0px;width:14.0px;height:0.9px;background:#6e6e6e;"></div>
<div class="r" style="left:630.0px;top:384.5px;width:2.0px;height:2.0px;background:#444;"></div>
<div class="r" style="left:634.0px;top:385.0px;width:10.0px;height:0.9px;background:#6e6e6e;"></div>
<div class="r" style="left:651.0px;top:342.0px;width:2.2px;height:2.2px;background:#444;"></div>
<div class="r" style="left:654.5px;top:342.6px;width:8.0px;height:0.8px;background:#6e6e6e;"></div>
<div class="r" style="left:659.0px;top:347.5px;width:2.2px;height:2.2px;background:#444;"></div>
<div class="r" style="left:662.5px;top:348.1px;width:8.0px;height:0.8px;background:#6e6e6e;"></div>
<div class="r" style="left:651.0px;top:374.0px;width:2.2px;height:2.2px;background:#444;"></div>
<div class="r" style="left:654.5px;top:374.6px;width:8.0px;height:0.8px;background:#6e6e6e;"></div>
<div class="r" style="left:699.0px;top:342.2px;width:2.2px;height:2.2px;background:#444;"></div>
<div class="r" style="left:702.5px;top:342.8px;width:8.0px;height:0.8px;background:#6e6e6e;"></div>
<div class="r" style="left:699.0px;top:346.5px;width:2.2px;height:2.2px;background:#444;"></div>
<div class="r" style="left:702.5px;top:347.1px;width:8.0px;height:0.8px;background:#6e6e6e;"></div>
<div class="r" style="left:639.0px;top:357.0px;width:2.2px;height:2.2px;background:#444;"></div>
<div class="r" style="left:642.5px;top:357.6px;width:8.0px;height:0.8px;background:#6e6e6e;"></div>
<div class="r" style="left:646.0px;top:357.0px;width:2.2px;height:2.2px;background:#444;"></div>
<div class="r" style="left:649.5px;top:357.6px;width:8.0px;height:0.8px;background:#6e6e6e;"></div>
<div class="r" style="left:656.0px;top:357.0px;width:2.2px;height:2.2px;background:#444;"></div>
<div class="r" style="left:659.5px;top:357.6px;width:8.0px;height:0.8px;background:#6e6e6e;"></div>
<div class="r" style="left:639.0px;top:361.0px;width:2.2px;height:2.2px;background:#444;"></div>
<div class="r" style="left:642.5px;top:361.6px;width:8.0px;height:0.8px;background:#6e6e6e;"></div>
<div class="r" style="left:646.0px;top:361.0px;width:2.2px;height:2.2px;background:#444;"></div>
<div class="r" style="left:649.5px;top:361.6px;width:8.0px;height:0.8px;background:#6e6e6e;"></div>
<div class="r" style="left:625.5px;top:390.0px;width:88.0px;height:0.9px;background:#5a5a5a;"></div>
<div class="r" style="left:625.5px;top:394.6px;width:88.0px;height:0.9px;background:#5a5a5a;"></div>
<div class="r" style="left:625.5px;top:390.0px;width:0.9px;height:5.5px;background:#5a5a5a;"></div>
<div class="r" style="left:712.6px;top:390.0px;width:0.9px;height:5.5px;background:#5a5a5a;"></div>
<div class="r" style="left:625.5px;top:392.3px;width:30.0px;height:1.0px;background:#555;"></div>
<div class="r" style="left:670.0px;top:390.0px;width:0.9px;height:5.5px;background:#555;"></div>
<div class="r" style="left:679.0px;top:390.0px;width:0.9px;height:5.5px;background:#555;"></div>
<div class="r" style="left:687.0px;top:390.0px;width:0.9px;height:5.5px;background:#555;"></div>
<div class="r" style="left:625.5px;top:398.0px;width:12.0px;height:1.2px;background:#444;"></div>
<div class="r" style="left:625.5px;top:400.0px;width:88.0px;height:0.9px;background:#5a5a5a;"></div>
<div class="r" style="left:625.5px;top:419.1px;width:88.0px;height:0.9px;background:#5a5a5a;"></div>
<div class="r" style="left:625.5px;top:400.0px;width:0.9px;height:20.0px;background:#5a5a5a;"></div>
<div class="r" style="left:712.6px;top:400.0px;width:0.9px;height:20.0px;background:#5a5a5a;"></div>
<div class="r" style="left:625.5px;top:404.0px;width:88.0px;height:0.8px;background:#555;"></div>
<div class="r" style="left:625.5px;top:411.0px;width:88.0px;height:0.8px;background:#555;"></div>
<div class="r" style="left:654.0px;top:400.0px;width:0.8px;height:20.0px;background:#555;"></div>
<div class="r" style="left:666.0px;top:400.0px;width:0.8px;height:20.0px;background:#555;"></div>
<div class="r" style="left:693.0px;top:404.0px;width:0.8px;height:16.0px;background:#555;"></div>
<div class="r" style="left:626.5px;top:406.0px;width:3.0px;height:3.0px;background:#444;"></div>
<div class="r" style="left:626.5px;top:413.0px;width:3.0px;height:3.0px;background:#444;"></div>
<div class="r" style="left:625.5px;top:423.0px;width:14.0px;height:1.0px;background:#444;"></div>
<div class="r" style="left:625.5px;top:425.0px;width:88.0px;height:0.9px;background:#5a5a5a;"></div>
<div class="r" style="left:625.5px;top:457.1px;width:88.0px;height:0.9px;background:#5a5a5a;"></div>
<div class="r" style="left:625.5px;top:425.0px;width:0.9px;height:33.0px;background:#5a5a5a;"></div>
<div class="r" style="left:712.6px;top:425.0px;width:0.9px;height:33.0px;background:#5a5a5a;"></div>
<div class="r" style="left:625.5px;top:430.0px;width:88.0px;height:0.7px;background:#666;"></div>
<div class="r" style="left:627.5px;top:427.3px;width:2.0px;height:2.0px;background:#4a4a4a;"></div>
<div class="r" style="left:631.0px;top:428.0px;width:12.0px;height:0.8px;background:#6e6e6e;"></div>
<div class="r" style="left:625.5px;top:434.0px;width:88.0px;height:0.7px;background:#666;"></div>
<div class="r" style="left:627.5px;top:431.3px;width:2.0px;height:2.0px;background:#4a4a4a;"></div>
<div class="r" style="left:631.0px;top:432.0px;width:12.0px;height:0.8px;background:#6e6e6e;"></div>
<div class="r" style="left:625.5px;top:438.0px;width:88.0px;height:0.7px;background:#666;"></div>
<div class="r" style="left:627.5px;top:435.3px;width:2.0px;height:2.0px;background:#4a4a4a;"></div>
<div class="r" style="left:631.0px;top:436.0px;width:12.0px;height:0.8px;background:#6e6e6e;"></div>
<div class="r" style="left:625.5px;top:442.0px;width:88.0px;height:0.7px;background:#666;"></div>
<div class="r" style="left:627.5px;top:439.3px;width:2.0px;height:2.0px;background:#4a4a4a;"></div>
<div class="r" style="left:631.0px;top:440.0px;width:12.0px;height:0.8px;background:#6e6e6e;"></div>
<div class="r" style="left:625.5px;top:446.0px;width:88.0px;height:0.7px;background:#666;"></div>
<div class="r" style="left:627.5px;top:443.3px;width:2.0px;height:2.0px;background:#4a4a4a;"></div>
<div class="r" style="left:631.0px;top:444.0px;width:12.0px;height:0.8px;background:#6e6e6e;"></div>
<div class="r" style="left:625.5px;top:450.0px;width:88.0px;height:0.7px;background:#666;"></div>
<div class="r" style="left:627.5px;top:447.3px;width:2.0px;height:2.0px;background:#4a4a4a;"></div>
<div class="r" style="left:631.0px;top:448.0px;width:12.0px;height:0.8px;background:#6e6e6e;"></div>
<div class="r" style="left:625.5px;top:454.0px;width:88.0px;height:0.7px;background:#666;"></div>
<div class="r" style="left:627.5px;top:451.3px;width:2.0px;height:2.0px;background:#4a4a4a;"></div>
<div class="r" style="left:631.0px;top:452.0px;width:12.0px;height:0.8px;background:#6e6e6e;"></div>
<div class="r" style="left:646.0px;top:425.0px;width:0.8px;height:33.0px;background:#555;"></div>
<div class="r" style="left:657.0px;top:425.0px;width:0.8px;height:33.0px;background:#555;"></div>
<div class="r" style="left:668.0px;top:425.0px;width:0.8px;height:33.0px;background:#555;"></div>
<div class="r" style="left:693.0px;top:425.0px;width:0.8px;height:33.0px;background:#555;"></div>
<div class="r" style="left:625.5px;top:508.7px;width:27.0px;height:2.6px;background:#666;"></div>
<div class="r" style="left:625.5px;top:511.3px;width:88.0px;height:0.9px;background:#555;"></div>
<div class="r" style="left:625.5px;top:522.4px;width:88.0px;height:0.9px;background:#555;"></div>
<div class="r" style="left:625.5px;top:511.3px;width:0.9px;height:12.0px;background:#555;"></div>
<div class="r" style="left:712.6px;top:511.3px;width:0.9px;height:12.0px;background:#555;"></div>
<div class="r" style="left:625.5px;top:514.2px;width:88.0px;height:0.8px;background:#555;"></div>
<div class="r" style="left:625.5px;top:517.2px;width:88.0px;height:0.8px;background:#555;"></div>
<div class="r" style="left:625.5px;top:520.2px;width:88.0px;height:0.8px;background:#555;"></div>
<div class="r" style="left:652.0px;top:514.2px;width:0.8px;height:3.0px;background:#555;"></div>
<div class="r" style="left:674.0px;top:514.2px;width:0.8px;height:6.0px;background:#555;"></div>
<div class="r" style="left:665.0px;top:511.3px;width:0.8px;height:3.0px;background:#555;"></div>
<div class="r" style="left:625.5px;top:525.7px;width:32.0px;height:1.0px;background:#555;"></div>
<div class="r" style="left:625.5px;top:528.2px;width:88.0px;height:0.9px;background:#555;"></div>
<div class="r" style="left:625.5px;top:552.3px;width:88.0px;height:0.9px;background:#555;"></div>
<div class="r" style="left:625.5px;top:528.2px;width:0.9px;height:25.0px;background:#555;"></div>
<div class="r" style="left:712.6px;top:528.2px;width:0.9px;height:25.0px;background:#555;"></div>
<div class="r" style="left:625.5px;top:534.7px;width:88.0px;height:0.8px;background:#666;"></div>
<div class="r" style="left:649.0px;top:530.7px;width:0.8px;height:18.0px;background:#555;"></div>
<div class="r" style="left:627.0px;top:538.7px;width:2.0px;height:2.0px;background:#444;"></div>
<div class="r" style="left:627.0px;top:530.7px;width:22.0px;height:0.8px;background:#6e6e6e;"></div>
<div class="r" style="left:625.5px;top:556.7px;width:7.0px;height:0.9px;background:#444;"></div>
<div class="r" style="left:625.5px;top:559.3px;width:7.0px;height:0.9px;background:#444;"></div>
<div class="r" style="left:625.5px;top:556.7px;width:0.9px;height:3.5px;background:#444;"></div>
<div class="r" style="left:631.6px;top:556.7px;width:0.9px;height:3.5px;background:#444;"></div>
<div class="r" style="left:625.5px;top:561.2px;width:88.0px;height:0.9px;background:#5e5e5e;"></div>
<div class="r" style="left:625.5px;top:612.3px;width:88.0px;height:0.9px;background:#5e5e5e;"></div>
<div class="r" style="left:625.5px;top:561.2px;width:0.9px;height:52.0px;background:#5e5e5e;"></div>
<div class="r" style="left:712.6px;top:561.2px;width:0.9px;height:52.0px;background:#5e5e5e;"></div>
<div class="r" style="left:628.0px;top:564.7px;width:30.0px;height:0.8px;background:#6e6e6e;"></div>
<div class="r" style="left:628.0px;top:568.7px;width:16.0px;height:0.8px;background:#6e6e6e;"></div>
<div class="r" style="left:644.0px;top:569.7px;width:2.0px;height:2.0px;background:#555;"></div>
<div class="r" style="left:628.5px;top:573.7px;width:41.0px;height:1.0px;background:#555;"></div>
<div class="r" style="left:628.5px;top:589.7px;width:41.0px;height:1.0px;background:#555;"></div>
<div class="r" style="left:628.5px;top:573.7px;width:1.0px;height:17.0px;background:#555;"></div>
<div class="r" style="left:668.5px;top:573.7px;width:1.0px;height:17.0px;background:#555;"></div>
<div class="r" style="left:670.5px;top:573.7px;width:41.0px;height:1.0px;background:#555;"></div>
<div class="r" style="left:670.5px;top:589.7px;width:41.0px;height:1.0px;background:#555;"></div>
<div class="r" style="left:670.5px;top:573.7px;width:1.0px;height:17.0px;background:#555;"></div>
<div class="r" style="left:710.5px;top:573.7px;width:1.0px;height:17.0px;background:#555;"></div>
<div class="r" style="left:636.0px;top:587.7px;width:3.0px;height:1.0px;background:#444;"></div>
<div class="r" style="left:650.0px;top:587.7px;width:3.0px;height:1.0px;background:#444;"></div>
<div class="r" style="left:678.0px;top:587.7px;width:3.0px;height:1.0px;background:#444;"></div>
<div class="r" style="left:690.0px;top:587.7px;width:3.0px;height:1.0px;background:#444;"></div>
<div class="r" style="left:628.0px;top:593.7px;width:2.0px;height:2.0px;background:#444;"></div>
<div class="r" style="left:631.0px;top:594.7px;width:70.0px;height:0.8px;background:#6e6e6e;"></div>
<div class="r" style="left:631.0px;top:597.2px;width:50.0px;height:0.8px;background:#6e6e6e;"></div>
<div class="r" style="left:625.5px;top:604.7px;width:88.0px;height:1.1px;background:#4a4a4a;"></div>
<div class="r" style="left:625.5px;top:607.2px;width:25.0px;height:1.8px;background:#555;"></div>
<div class="r" style="left:625.5px;top:609.7px;width:88.0px;height:0.9px;background:#555;"></div>
<div class="r" style="left:674.0px;top:609.7px;width:0.8px;height:4.0px;background:#555;"></div>
<div class="r" style="left:625.5px;top:614.7px;width:88.0px;height:0.8px;background:#5a5a5a;"></div>
<div class="r" style="left:626.5px;top:612.0px;width:1.8px;height:1.8px;background:#444;"></div>
<div class="r" style="left:630.0px;top:612.7px;width:40.0px;height:0.8px;background:#6e6e6e;"></div>
<div class="r" style="left:625.5px;top:618.7px;width:88.0px;height:0.8px;background:#5a5a5a;"></div>
<div class="r" style="left:626.5px;top:616.0px;width:1.8px;height:1.8px;background:#444;"></div>
<div class="r" style="left:630.0px;top:616.7px;width:46.0px;height:0.8px;background:#6e6e6e;"></div>
<div class="r" style="left:625.5px;top:622.7px;width:88.0px;height:0.8px;background:#5a5a5a;"></div>
<div class="r" style="left:626.5px;top:620.0px;width:1.8px;height:1.8px;background:#444;"></div>
<div class="r" style="left:630.0px;top:620.7px;width:52.0px;height:0.8px;background:#6e6e6e;"></div>
<div class="r" style="left:625.5px;top:623.2px;width:88.0px;height:1.0px;background:#4a4a4a;"></div>
<div class="r" style="left:625.5px;top:692.2px;width:27.0px;height:2.6px;background:#666;"></div>
<div class="r" style="left:625.5px;top:695.7px;width:88.0px;height:1.0px;background:#4f4f4f;"></div>
<div class="r" style="left:625.5px;top:707.7px;width:88.0px;height:1.0px;background:#4f4f4f;"></div>
<div class="r" style="left:625.5px;top:695.7px;width:1.0px;height:13.0px;background:#4f4f4f;"></div>
<div class="r" style="left:712.5px;top:695.7px;width:1.0px;height:13.0px;background:#4f4f4f;"></div>
<div class="r" style="left:627.0px;top:697.7px;width:84.0px;height:0.7px;background:#777;"></div>
<div class="r" style="left:627.0px;top:699.7px;width:60.0px;height:0.7px;background:#777;"></div>
<div class="r" style="left:625.5px;top:710.2px;width:88.0px;height:1.0px;background:#4f4f4f;"></div>
<div class="r" style="left:625.5px;top:717.2px;width:88.0px;height:1.0px;background:#4f4f4f;"></div>
<div class="r" style="left:625.5px;top:710.2px;width:1.0px;height:8.0px;background:#4f4f4f;"></div>
<div class="r" style="left:712.5px;top:710.2px;width:1.0px;height:8.0px;background:#4f4f4f;"></div>
<div class="r" style="left:677.0px;top:714.2px;width:4.0px;height:0.9px;background:#444;"></div>
<div class="r" style="left:684.0px;top:714.2px;width:4.0px;height:0.9px;background:#444;"></div>
<div class="r" style="left:625.5px;top:719.7px;width:88.0px;height:1.0px;background:#4f4f4f;"></div>
<div class="r" style="left:625.5px;top:727.2px;width:88.0px;height:1.0px;background:#4f4f4f;"></div>
<div class="r" style="left:625.5px;top:719.7px;width:1.0px;height:8.5px;background:#4f4f4f;"></div>
<div class="r" style="left:712.5px;top:719.7px;width:1.0px;height:8.5px;background:#4f4f4f;"></div>
<div class="r" style="left:669.0px;top:738.2px;width:33.0px;height:0.9px;background:#555;"></div>
</div>
<!-- pdf page -->
<div class="r" style="left:1058.0px;top:116.8px;width:725.8px;height:1007.0px;background:#9e9e9e;"></div>
<svg class="r" style="left:1072px;top:132px" width="60" height="40" viewBox="0 0 60 40">
<path d="M24.600 7.500C26 7.500 27 8.400 27 9.600L28.700 10.200L27 10.900C27 11.600 26.900 12.200 27.300 12.700C28.300 10.800 29.600 9 31.400 8.400C33.700 9.300 35.700 12 37.400 16C38.100 17.200 38.600 18.300 38.800 19.300L37.800 22.800L36 25.400L33.500 27.800L31 28.900L29 27.800L27.300 26.500L27.700 35.300H21L22.100 26.500L20 28.100L17.800 29.200L15.300 28.100L12.800 25.700L10.700 23.200L9.300 20C9.900 16.500 11.400 13.200 13.500 11.200C14.500 9.900 15.500 8.900 16.700 8.400C18.800 8.800 20.500 10.300 21.900 12.700C22.300 11.900 22.300 11 22.300 10C22.300 8.500 23.300 7.500 24.600 7.500Z" fill="#1b1b1b"/>
<circle cx="18.700" cy="12.900" r="2" fill="#9e9e9e" opacity=".72"/><circle cx="30.300" cy="12.900" r="2" fill="#9e9e9e" opacity=".72"/>
<g stroke="#9e9e9e" stroke-width=".55" opacity=".42" fill="none">
<path d="M21.300 18.200L10 20.700M21.700 19.700L10.900 23.400M22 21.200L12.400 25.600M22.300 22.700L14.300 27.500M22.500 24.200L16.500 28.800M22.500 25.700L19 28.800"/>
<path d="M27.900 18.200L38.500 20.200M27.500 19.700L37.700 23M27.200 21.200L36.300 25.200M26.900 22.700L34.500 27.100M26.700 24.200L32.300 28.500M26.700 25.700L30 28.500"/>
</g>
<path d="M15.800 29.600L20.600 34.300L21.800 28.700ZM33.200 29.400L28.200 33.800L27.500 28.700Z" fill="#1b1b1b" opacity=".4"/>
</svg>
<div class="r" style="left:1117.7px;top:141.0px;width:5.6px;height:26.0px;background:#1c1c1c;"></div>
<div class="r" style="left:1117.7px;top:167.0px;width:5.6px;height:25.5px;background:#98231f;"></div>
<div class="r" style="left:1117.7px;top:192.5px;width:5.6px;height:25.5px;background:#b49423;border-radius:0 0 2px 2px;"></div>
<div class="t" style="left:1131.3px;top:140px;font-size:14.4px;color:#262626;transform:scaleX(.832);transform-origin:0 0;letter-spacing:.1px;">Bundesverwaltungsamt</div>
<div class="t" style="left:1131.3px;top:155px;font-size:14.4px;color:#262626;transform:scaleX(.832);transform-origin:0 0;letter-spacing:.1px;">Dienstleistungszentrum</div>
<svg class="r" style="left:1638px;top:134px" width="130" height="68" viewBox="1638 134 130 68">
<path d="M1642.1 169.0C1643.7 166.2 1648.5 156.4 1652.0 152.2C1655.5 147.9 1658.7 145.5 1663.0 143.4C1667.2 141.3 1672.7 140.0 1677.6 139.7C1682.5 139.5 1688.0 140.3 1692.3 141.9C1696.5 143.5 1700.2 146.7 1703.3 149.2C1706.3 151.8 1708.6 154.3 1710.6 157.3C1712.5 160.4 1714.2 165.9 1715.0 167.6C1713.6 165.9 1710.1 160.2 1706.9 157.3C1703.7 154.4 1700.2 151.7 1695.9 150.0C1691.7 148.2 1686.2 146.9 1681.3 146.7C1676.4 146.4 1670.9 147.1 1666.6 148.5C1662.4 149.9 1659.7 151.7 1655.6 155.1C1651.6 158.5 1644.3 166.7 1642.1 169.0Z" fill="#1c3f4f"/>
<path d="M1688.2 166.8C1688.9 168.7 1690.4 174.6 1692.3 177.8C1694.2 181.0 1696.5 183.6 1699.6 185.9C1702.6 188.2 1706.3 190.3 1710.6 191.7C1714.9 193.2 1720.4 194.8 1725.2 194.7C1730.1 194.5 1735.6 193.1 1739.9 191.0C1744.2 188.9 1747.9 185.4 1750.9 182.2C1753.8 179.0 1755.9 174.8 1757.5 172.0C1759.1 169.1 1759.9 166.5 1760.4 165.4C1759.4 166.9 1757.4 171.8 1754.5 174.9C1751.7 177.9 1747.8 181.6 1743.6 183.7C1739.3 185.8 1733.8 187.1 1728.9 187.3C1724.0 187.6 1718.5 186.4 1714.2 185.1C1710.0 183.9 1706.6 182.0 1703.3 180.0C1700.0 178.1 1697.0 175.6 1694.5 173.4C1692.0 171.2 1689.3 167.9 1688.2 166.8Z" fill="#1c3f4f"/>
<circle cx="1700.300" cy="166" r="6.900" fill="#47986a"/>
<text x="1643.700" y="194.400" font-family="Liberation Sans, sans-serif" font-weight="700" font-size="22" fill="#1f3a45" textLength="43.600" lengthAdjust="spacingAndGlyphs">DLZ</text></svg>
<div class="t" style="left:1323.6px;top:244px;font-size:17px;color:#222;">Abrechnungsstelle</div>
<div class="r" style="left:1319.0px;top:272.2px;width:17.4px;height:16.6px;box-sizing:border-box;border:1.4px solid #333;"></div>
<div class="t" style="left:1341.9px;top:274px;font-size:14.6px;color:#222;">Hamm</div>
<div class="r" style="left:1319.0px;top:297.5px;width:17.4px;height:16.6px;box-sizing:border-box;border:1.4px solid #333;"></div>
<div class="t" style="left:1341.9px;top:300px;font-size:14.6px;color:#222;">Osnabrück</div>
<div class="r" style="left:1319.0px;top:323.0px;width:17.4px;height:16.6px;box-sizing:border-box;border:1.4px solid #333;"></div>
<div class="t" style="left:1341.9px;top:325px;font-size:14.6px;color:#222;">Berlin</div>
<div class="r" style="left:1107.0px;top:292.5px;width:197.0px;height:86.0px;background:#979aa5;box-shadow:0 0 4px 2px #979aa5;border-radius:2px;"></div>
<div class="t" style="left:1106.0px;top:298px;font-size:14.7px;color:#474a58;">Bitte wählen Sie rechts die für</div>
<div class="t" style="left:1106.0px;top:318px;font-size:14.7px;color:#474a58;">Sie zutreffende Adresse der</div>
<div class="t" style="left:1106.0px;top:337px;font-size:14.7px;color:#474a58;">Abrechnungsstelle aus</div>
<div class="r" style="left:1529.0px;top:271.1px;width:202.6px;height:110.2px;background:#b1867a;box-shadow:0 0 2px #b1867a;"></div>
<div class="t" style="left:1532.3px;top:280px;font-size:12.15px;color:#25100c;">Ihre Unterlagen werden zur weiteren</div>
<div class="t" style="left:1532.3px;top:296px;font-size:12.15px;color:#25100c;">Bearbeitung gescannt. Dazu</div>
<div class="t" style="left:1532.3px;top:313px;font-size:12.15px;color:#25100c;">müssen sie einzeln vom Scanner</div>
<div class="t" style="left:1532.3px;top:328px;font-size:12.15px;color:#25100c;">eingezogen werden. Bitte verzichten</div>
<div class="t" style="left:1532.3px;top:345px;font-size:12.15px;color:#25100c;">Sie daher darauf, Unterlagen zu</div>
<div class="t" style="left:1532.3px;top:360px;font-size:12.15px;color:#25100c;">klammern, zu kleben oder zu heften.</div>
<div class="r" style="left:1130.0px;top:426.0px;width:180.0px;height:17.0px;background:#979aa5;box-shadow:0 0 4px 2px #979aa5;border-radius:2px;"></div>
<div class="r" style="left:1130.0px;top:452.0px;width:180.0px;height:15.0px;background:#979aa5;box-shadow:0 0 4px 2px #979aa5;border-radius:2px;"></div>
<div class="r" style="left:1106.8px;top:425.0px;width:20.8px;height:20.0px;box-sizing:border-box;border:1.3px solid #333;"></div>
<svg class="r" style="left:1106.800px;top:425px" width="20.800" height="20" viewBox="0 0 20.800 20"><path d="M2 2L18.800 18M18.800 2L2 18" stroke="#333" stroke-width="1.100"/></svg>
<div class="r" style="left:1106.8px;top:447.6px;width:20.8px;height:20.2px;box-sizing:border-box;border:1.3px solid #333;"></div>
<div class="t" style="left:1132.8px;top:428px;font-size:12.2px;color:#505258;">Dienstantrittsreise/Rückreise</div>
<div class="t" style="left:1132.8px;top:455px;font-size:12.2px;color:#505258;">Reisekosten Ausland</div>
<div class="r" style="left:1346.0px;top:441.0px;width:108.0px;height:19.0px;background:#979aa5;box-shadow:0 0 4px 2px #979aa5;border-radius:2px;"></div>
<div class="t" style="left:1350.3px;top:444px;font-size:12.25px;color:#505258;">auf Einladung von</div>
<div class="r" style="left:1486.0px;top:439.0px;width:253.0px;height:20.0px;background:#979aa5;box-shadow:0 0 4px 2px #979aa5;border-radius:2px;"></div>
<div class="t" style="left:1103.0px;top:477px;font-size:11px;color:#a91f29;">(Bitte die Behördenbezeichnung bzw. das Gremium eintragen und die Dienstreisegenehmigung /Einladung/Kostenübernahmeerklä-</div>
<div class="t" style="left:1103.0px;top:490px;font-size:11px;color:#a91f29;">rung beifügen, falls Sie sie noch nicht vor der Reise vorgelegt haben)</div>
<div class="r" style="left:1062.8px;top:516.0px;width:25.7px;height:1.0px;background:#444;"></div>
<div class="r" style="left:1104.5px;top:514.8px;width:125.0px;height:13.6px;background:#919191;"></div>
<div class="t" style="left:1107.5px;top:516px;font-size:13.3px;color:#222;">Angaben zur Person</div>
<div class="r" style="left:1102.5px;top:514.6px;width:1.2px;height:96.4px;background:#2b2b2b;"></div>
<div class="r" style="left:1767.9px;top:514.6px;width:1.2px;height:96.4px;background:#2b2b2b;"></div>
<div class="r" style="left:1103.1px;top:529.8px;width:665.4px;height:1.2px;background:#2b2b2b;"></div>
<div class="r" style="left:1103.1px;top:556.9px;width:665.4px;height:1.2px;background:#2b2b2b;"></div>
<div class="r" style="left:1103.1px;top:583.6px;width:665.4px;height:1.2px;background:#2b2b2b;"></div>
<div class="r" style="left:1103.1px;top:610.4px;width:665.4px;height:1.2px;background:#2b2b2b;"></div>
<div class="t" style="left:1107.5px;top:532px;font-size:9.8px;color:#222;">Name, Vorname</div>
<div class="r" style="left:1110.0px;top:546.0px;width:215.0px;height:8.0px;background:#9b9ca3;box-shadow:0 0 4px 2px #9b9ca3;border-radius:3px;"></div>
<div class="r" style="left:1326.6px;top:530.4px;width:1.2px;height:27.1px;background:#2b2b2b;"></div>
<div class="r" style="left:1577.8px;top:530.4px;width:1.2px;height:53.8px;background:#2b2b2b;"></div>
<div class="t" style="left:1331.6px;top:532px;font-size:9.8px;color:#222;">Beamtin/Beamter</div>
<div class="t" style="left:1426.5px;top:532px;font-size:9.8px;color:#222;">TB/TB'e</div>
<div class="t" style="left:1475.5px;top:532px;font-size:9.8px;color:#222;">Anwärter/in</div>
<div class="t" style="left:1540.7px;top:532px;font-size:9.8px;color:#222;">Azubi</div>
<div class="r" style="left:1362.4px;top:543.2px;width:13.4px;height:11.0px;box-sizing:border-box;border:1.1px solid #333;"></div>
<div class="r" style="left:1436.3px;top:543.2px;width:13.4px;height:11.0px;box-sizing:border-box;border:1.1px solid #333;"></div>
<div class="r" style="left:1494.2px;top:543.2px;width:13.4px;height:11.0px;box-sizing:border-box;border:1.1px solid #333;"></div>
<div class="r" style="left:1545.5px;top:543.2px;width:13.4px;height:11.0px;box-sizing:border-box;border:1.1px solid #333;"></div>
<div class="t" style="left:1582.8px;top:532px;font-size:9.8px;color:#222;">Aktenzeichen</div>
<div class="r" style="left:1586.0px;top:545.0px;width:152.0px;height:8.0px;background:#9b9ca3;box-shadow:0 0 4px 2px #9b9ca3;border-radius:3px;"></div>
<div class="t" style="left:1206.4px;top:558px;font-size:9.8px;color:#222;">Dienstort</div>
<div class="t" style="left:1206.4px;top:571px;font-size:13px;color:#606068;">Dienstort</div>
<div class="r" style="left:1301.4px;top:557.5px;width:1.2px;height:26.7px;background:#2b2b2b;"></div>
<div class="r" style="left:1396.2px;top:557.5px;width:1.2px;height:26.7px;background:#2b2b2b;"></div>
<div class="r" style="left:1474.2px;top:557.5px;width:1.2px;height:26.7px;background:#2b2b2b;"></div>
<div class="t" style="left:1306.3px;top:559px;font-size:9.8px;color:#222;">Referat/Org.-einheit</div>
<div class="t" style="left:1400.8px;top:559px;font-size:9.8px;color:#a91f29;font-weight:700;">Kostenstelle</div>
<div class="t" style="left:1478.8px;top:559px;font-size:9.8px;color:#a91f29;font-weight:700;">Kostenträger</div>
<div class="t" style="left:1582.8px;top:559px;font-size:9.8px;color:#222;">Telefon-Nr. (dienstlich)</div>
<div class="r" style="left:1697.0px;top:572.0px;width:42.0px;height:6.0px;background:#9b9ca3;box-shadow:0 0 4px 2px #9b9ca3;border-radius:3px;"></div>
<div class="t" style="left:1107.5px;top:586px;font-size:9.8px;color:#222;">E-Mail-Adresse</div>
<div class="r" style="left:1112.0px;top:598.0px;width:280.0px;height:10.0px;background:#9b9ca3;box-shadow:0 0 4px 2px #9b9ca3;border-radius:3px;"></div>
<div class="r" style="left:1396.2px;top:584.2px;width:1.2px;height:26.8px;background:#2b2b2b;"></div>
<div class="r" style="left:1686.0px;top:589.0px;width:78.0px;height:19.0px;background:#9b9ca3;box-shadow:0 0 4px 2px #9b9ca3;border-radius:3px;"></div>
<div class="t" style="left:1404.5px;top:592px;font-size:13.4px;color:#a91f29;">Bei Abordnung bitte Stammbehörde eintragen:</div>
<div class="r" style="left:1105.5px;top:618.0px;width:632.0px;height:14.5px;background:#919191;"></div>
<div class="t" style="left:1108.6px;top:619px;font-size:12.25px;color:#222;letter-spacing:-0.02px;">Bitte die folgenden Angaben nur bei erstmaliger Antragstellung oder bei Änderung der persönlichen Daten eintragen.</div>
<div class="r" style="left:1103.6px;top:617.2px;width:1.2px;height:125.2px;background:#2b2b2b;"></div>
<div class="r" style="left:1767.9px;top:617.2px;width:1.2px;height:125.2px;background:#2b2b2b;"></div>
<div class="r" style="left:1104.2px;top:632.4px;width:664.3px;height:1.2px;background:#2b2b2b;"></div>
<div class="r" style="left:1104.2px;top:667.1px;width:664.3px;height:1.2px;background:#2b2b2b;"></div>
<div class="r" style="left:1104.2px;top:694.6px;width:664.3px;height:1.2px;background:#2b2b2b;"></div>
<div class="r" style="left:1104.2px;top:741.8px;width:664.3px;height:1.2px;background:#2b2b2b;"></div>
<div class="t" style="left:1108.6px;top:635px;font-size:9.8px;color:#222;">Anschrift</div>
<div class="r" style="left:1438.3px;top:633.0px;width:1.2px;height:34.7px;background:#2b2b2b;"></div>
<div class="t" style="left:1444.0px;top:635px;font-size:9.8px;color:#222;">Abweichender Familienwohnort (Anschrift)</div>
<div class="r" style="left:1112.0px;top:648.0px;width:320.0px;height:14.0px;background:#9b9ca3;box-shadow:0 0 4px 2px #9b9ca3;border-radius:3px;"></div>
<div class="r" style="left:1448.0px;top:648.0px;width:190.0px;height:14.0px;background:#9b9ca3;box-shadow:0 0 4px 2px #9b9ca3;border-radius:3px;"></div>
<div class="t" style="left:1108.6px;top:679px;font-size:9.8px;color:#a91f29;">Personalnummer (11-stellig)</div>
<div class="t" style="left:1234.4px;top:679px;font-size:9.8px;color:#222;">(siehe Bezügebescheinigung):</div>
<div class="r" style="left:1380.0px;top:676.0px;width:190.0px;height:11.0px;background:#9b9ca3;box-shadow:0 0 4px 2px #9b9ca3;border-radius:3px;"></div>
<div class="t" style="left:1108.6px;top:698px;font-size:10.9px;color:#222;">Bankverbindung</div>
<div class="t" style="left:1108.6px;top:710px;font-size:9.8px;color:#222;">Name des Geldinstituts mit Ortsangabe</div>
<div class="r" style="left:1396.2px;top:708.7px;width:1.2px;height:33.7px;background:#2b2b2b;"></div>
<div class="r" style="left:1612.3px;top:708.7px;width:1.2px;height:33.7px;background:#2b2b2b;"></div>
<div class="t" style="left:1400.8px;top:710px;font-size:9.8px;color:#222;">IBAN/Kartennummer</div>
<div class="t" style="left:1616.9px;top:710px;font-size:9.8px;color:#222;">BIC</div>
<div class="r" style="left:1112.0px;top:724.0px;width:190.0px;height:12.0px;background:#9b9ca3;box-shadow:0 0 4px 2px #9b9ca3;border-radius:3px;"></div>
<div class="r" style="left:1402.0px;top:724.0px;width:190.0px;height:12.0px;background:#9b9ca3;box-shadow:0 0 4px 2px #9b9ca3;border-radius:3px;"></div>
<div class="r" style="left:1618.0px;top:724.0px;width:100.0px;height:12.0px;background:#9b9ca3;box-shadow:0 0 4px 2px #9b9ca3;border-radius:3px;"></div>
<div class="r" style="left:1105.7px;top:754.6px;width:172.4px;height:68.2px;background:#939393;"></div>
<div class="r" style="left:1282.0px;top:757.0px;width:440.0px;height:16.0px;background:#9b9ca3;box-shadow:0 0 4px 2px #9b9ca3;border-radius:3px;"></div>
<div class="r" style="left:1282.0px;top:779.0px;width:440.0px;height:16.0px;background:#9b9ca3;box-shadow:0 0 4px 2px #9b9ca3;border-radius:3px;"></div>
<div class="r" style="left:1105.7px;top:754.0px;width:664.6px;height:1.3px;background:#2b2b2b;"></div>
<div class="r" style="left:1105.7px;top:774.9px;width:664.6px;height:1.3px;background:#2b2b2b;"></div>
<div class="r" style="left:1105.7px;top:796.9px;width:664.6px;height:1.3px;background:#2b2b2b;"></div>
<div class="r" style="left:1105.7px;top:822.1px;width:664.6px;height:1.3px;background:#2b2b2b;"></div>
<div class="r" style="left:1105.0px;top:754.6px;width:1.3px;height:68.2px;background:#2b2b2b;"></div>
<div class="r" style="left:1769.6px;top:754.6px;width:1.3px;height:68.2px;background:#2b2b2b;"></div>
<div class="r" style="left:1277.4px;top:754.6px;width:1.3px;height:68.2px;background:#2b2b2b;"></div>
<div class="t" style="left:1109.7px;top:760px;font-size:12.1px;color:#222;">Zweck der Dienstreise</div>
<div class="t" style="left:1109.7px;top:780px;font-size:12.1px;color:#222;">Geschäftsort(e)</div>
<div class="r" style="left:1106.800px;top:826.800px;width:662.800px;height:36.200px;box-sizing:border-box;border:1.300px solid #4a4a4a;background:#949494;"></div>
<div class="r" style="left:1106px;top:871.100px;width:662.500px;height:137.200px;box-sizing:border-box;border:1.300px solid #4a4a4a;"></div>
<div class="r" style="left:1106.0px;top:902.5px;width:662.5px;height:1.0px;background:#555;"></div>
<div class="r" style="left:1106.0px;top:972.8px;width:662.5px;height:1.0px;background:#555;"></div>
<div class="r" style="left:1104.9px;top:1007.5px;width:663.6px;height:1.5px;background:#2b2b2b;"></div>
<div class="r" style="left:1067.6px;top:925.2px;width:25.2px;height:1.0px;background:#444;"></div>
<div class="t" style="left:1109.7px;top:879px;font-size:10.95px;color:#222;">Beginn der Reise:</div>
<div class="t" style="left:1275.2px;top:879px;font-size:10.95px;color:#222;">am</div>
<div class="t" style="left:1375.2px;top:879px;font-size:10.95px;color:#222;">um</div>
<div class="t" style="left:1441.1px;top:879px;font-size:10.95px;color:#222;">Uhr</div>
<div class="r" style="left:1304.0px;top:878.1px;width:62.0px;height:10.0px;background:#9b9ca3;box-shadow:0 0 2px 1px #9b9ca3;border-radius:2px;"></div>
<div class="r" style="left:1403.0px;top:878.1px;width:28.0px;height:10.0px;background:#9b9ca3;box-shadow:0 0 2px 1px #9b9ca3;border-radius:2px;"></div>
<div class="t" style="left:1109.7px;top:906px;font-size:10.95px;color:#222;">Ankunft am Geschäftsort</div>
<div class="t" style="left:1275.2px;top:906px;font-size:10.95px;color:#222;">am</div>
<div class="t" style="left:1375.2px;top:908px;font-size:10.95px;color:#222;">um</div>
<div class="t" style="left:1441.1px;top:908px;font-size:10.95px;color:#222;">Uhr</div>
<div class="r" style="left:1304.0px;top:907.0px;width:62.0px;height:10.0px;background:#9b9ca3;box-shadow:0 0 2px 1px #9b9ca3;border-radius:2px;"></div>
<div class="r" style="left:1403.0px;top:907.0px;width:28.0px;height:10.0px;background:#9b9ca3;box-shadow:0 0 2px 1px #9b9ca3;border-radius:2px;"></div>
<div class="t" style="left:1109.7px;top:923px;font-size:10.95px;color:#222;">Beginn des Dienstgeschäftes</div>
<div class="t" style="left:1275.2px;top:923px;font-size:10.95px;color:#222;">am</div>
<div class="t" style="left:1375.2px;top:925px;font-size:10.95px;color:#222;">um</div>
<div class="t" style="left:1441.1px;top:925px;font-size:10.95px;color:#222;">Uhr</div>
<div class="r" style="left:1304.0px;top:923.8px;width:62.0px;height:10.0px;background:#9b9ca3;box-shadow:0 0 2px 1px #9b9ca3;border-radius:2px;"></div>
<div class="r" style="left:1403.0px;top:923.8px;width:28.0px;height:10.0px;background:#9b9ca3;box-shadow:0 0 2px 1px #9b9ca3;border-radius:2px;"></div>
<div class="t" style="left:1109.7px;top:940px;font-size:10.95px;color:#222;">Ende des Dienstgeschäftes</div>
<div class="t" style="left:1275.2px;top:940px;font-size:10.95px;color:#222;">am</div>
<div class="t" style="left:1375.2px;top:942px;font-size:10.95px;color:#222;">um</div>
<div class="t" style="left:1441.1px;top:942px;font-size:10.95px;color:#222;">Uhr</div>
<div class="r" style="left:1304.0px;top:941.0px;width:62.0px;height:10.0px;background:#9b9ca3;box-shadow:0 0 2px 1px #9b9ca3;border-radius:2px;"></div>
<div class="r" style="left:1403.0px;top:941.0px;width:28.0px;height:10.0px;background:#9b9ca3;box-shadow:0 0 2px 1px #9b9ca3;border-radius:2px;"></div>
<div class="t" style="left:1109.7px;top:957px;font-size:10.95px;color:#222;">Abfahrt am Geschäftsort</div>
<div class="t" style="left:1275.2px;top:957px;font-size:10.95px;color:#222;">am</div>
<div class="t" style="left:1375.2px;top:959px;font-size:10.95px;color:#222;">um</div>
<div class="t" style="left:1441.1px;top:959px;font-size:10.95px;color:#222;">Uhr</div>
<div class="r" style="left:1304.0px;top:958.3px;width:62.0px;height:10.0px;background:#9b9ca3;box-shadow:0 0 2px 1px #9b9ca3;border-radius:2px;"></div>
<div class="r" style="left:1403.0px;top:958.3px;width:28.0px;height:10.0px;background:#9b9ca3;box-shadow:0 0 2px 1px #9b9ca3;border-radius:2px;"></div>
<div class="t" style="left:1109.7px;top:984px;font-size:10.95px;color:#222;">Ende der Reise</div>
<div class="t" style="left:1275.2px;top:984px;font-size:10.95px;color:#222;">am</div>
<div class="t" style="left:1375.2px;top:984px;font-size:10.95px;color:#222;">um</div>
<div class="t" style="left:1441.1px;top:984px;font-size:10.95px;color:#222;">Uhr</div>
<div class="r" style="left:1304.0px;top:982.9px;width:62.0px;height:10.0px;background:#9b9ca3;box-shadow:0 0 2px 1px #9b9ca3;border-radius:2px;"></div>
<div class="r" style="left:1403.0px;top:982.9px;width:28.0px;height:10.0px;background:#9b9ca3;box-shadow:0 0 2px 1px #9b9ca3;border-radius:2px;"></div>
<div class="t" style="left:1469.3px;top:880px;font-size:10.95px;color:#222;">ab</div>
<div class="t" style="left:1469.3px;top:984px;font-size:10.95px;color:#222;">an</div>
<div class="t" style="left:1493.1px;top:875px;font-size:10.95px;color:#222;">reisekostenrechtliche</div>
<div class="t" style="left:1493.1px;top:888px;font-size:10.95px;color:#222;">Wohnung</div>
<div class="t" style="left:1609.2px;top:875px;font-size:10.95px;color:#222;">Dienststelle</div>
<div class="t" style="left:1676.9px;top:876px;font-size:10.95px;color:#222;">vorübergehender</div>
<div class="t" style="left:1676.9px;top:889px;font-size:10.95px;color:#222;">Aufenthaltsort</div>
<div class="r" style="left:1549.9px;top:888.3px;width:13.5px;height:11.4px;box-sizing:border-box;border:1.1px solid #444;"></div>
<div class="r" style="left:1624.4px;top:888.8px;width:13.5px;height:11.4px;box-sizing:border-box;border:1.1px solid #444;"></div>
<div class="r" style="left:1749.5px;top:888.8px;width:13.5px;height:11.4px;box-sizing:border-box;border:1.1px solid #444;"></div>
<div class="t" style="left:1493.1px;top:979px;font-size:10.95px;color:#222;">reisekostenrechtliche</div>
<div class="t" style="left:1493.1px;top:992px;font-size:10.95px;color:#222;">Wohnung</div>
<div class="t" style="left:1609.2px;top:979px;font-size:10.95px;color:#222;">Dienststelle</div>
<div class="t" style="left:1676.9px;top:980px;font-size:10.95px;color:#222;">vorübergehender</div>
<div class="t" style="left:1676.9px;top:993px;font-size:10.95px;color:#222;">Aufenthaltsort</div>
<div class="r" style="left:1549.9px;top:992.2px;width:13.5px;height:11.4px;box-sizing:border-box;border:1.1px solid #444;"></div>
<div class="r" style="left:1624.4px;top:992.7px;width:13.5px;height:11.4px;box-sizing:border-box;border:1.1px solid #444;"></div>
<div class="r" style="left:1749.5px;top:992.7px;width:13.5px;height:11.4px;box-sizing:border-box;border:1.1px solid #444;"></div>
<div class="r" style="left:1104.2px;top:1008.3px;width:1.3px;height:87.2px;background:#2b2b2b;"></div>
<div class="r" style="left:1767.8px;top:1008.3px;width:1.3px;height:87.2px;background:#2b2b2b;"></div>
<div class="r" style="left:1104.9px;top:1094.8px;width:663.6px;height:1.3px;background:#2b2b2b;"></div>
<div class="r" style="left:1107.5px;top:1016.8px;width:12.8px;height:11.0px;box-sizing:border-box;border:1.1px solid #444;"></div>
<div class="t" style="left:1123.6px;top:1018px;font-size:9.75px;color:#222;">Die Dienstreise wurde mit einer privaten Reise verbunden (bitte den Reiseverlauf erläutern):</div>
<div class="r" style="left:1127.0px;top:1032.5px;width:617.0px;height:16.0px;background:#9b9ca3;box-shadow:0 0 4px 2px #9b9ca3;border-radius:3px;"></div>
<div class="r" style="left:1107.5px;top:1057.8px;width:12.8px;height:11.3px;box-sizing:border-box;border:1.1px solid #444;"></div>
<div class="t" style="left:1123.6px;top:1059px;font-size:9.75px;color:#222;">Die Dienstreise wurde mit Telearbeit oder mobilem Arbeiten verbunden (bitte den Reiseverlauf erläutern):</div>
<div class="r" style="left:1127.0px;top:1073.0px;width:617.0px;height:20.0px;background:#9b9ca3;box-shadow:0 0 4px 2px #9b9ca3;border-radius:3px;"></div>
<div class="t" style="left:1102.4px;top:1100px;font-size:7.25px;color:#333;">Stand: 03.09.2019</div>
<div class="t" style="left:1697.0px;top:1100px;font-size:7.3px;color:#333;">Seite 1 von 5</div>
<!-- dialog -->
<div class="r" style="left:694.0px;top:369.3px;width:366.3px;height:323.7px;background:#ffffff;border-radius:3px;box-shadow:0 7px 18px rgba(0,0,0,.32),0 1px 5px rgba(0,0,0,.22);overflow:hidden;"></div>
<div class="r" style="left:694.0px;top:369.3px;width:366.3px;height:58.2px;background:#167ac5;border-radius:3px 3px 0 0;box-shadow:0 1px 1.500px rgba(20,60,90,.55);"></div>
<div class="t" style="left:708.8px;top:391px;font-size:18.3px;color:#f3f8fc;">Freigabe erstellen</div>
<svg class="r" style="left:1023.6px;top:387.8px;" width="22" height="22" viewBox="0 0 24 24"><path d="M19 6.41L17.59 5 12 10.59 6.41 5 5 6.41 10.59 12 5 17.59 6.41 19 12 13.41 17.59 19 19 17.59 13.41 12z" fill="#ffffff"/></svg>
<div class="t" style="left:716.2px;top:473px;font-size:14.55px;color:#202020;font-weight:700;">Gültigkeitsdauer</div>
<div class="r" style="left:716px;top:506.800px;width:18.400px;height:18.400px;border-radius:50%;box-sizing:border-box;border:2.200px solid #93cef6;"></div>
<div class="r" style="left:720.8px;top:511.6px;width:8.8px;height:8.8px;background:#8fcbf5;border-radius:50%;"></div>
<div class="t" style="left:743.8px;top:510px;font-size:14.7px;color:#303030;">Unbegrenzt gültig</div>
<div class="r" style="left:716px;top:541.800px;width:18.400px;height:18.400px;border-radius:50%;box-sizing:border-box;border:2px solid #6c6c6c;"></div>
<div class="t" style="left:743.8px;top:544px;font-size:14.7px;color:#303030;">Gültig für</div>
<div class="r" style="left:815.300px;top:539.700px;width:52.500px;height:21.500px;box-sizing:border-box;border:1.400px solid #888;border-radius:2.500px;background:#fff;"></div>
<div class="t" style="left:880.3px;top:544px;font-size:14.7px;color:#303030;">Tage</div>
<div class="r" style="left:716px;top:585px;width:18.400px;height:18.400px;border-radius:50%;box-sizing:border-box;border:2px solid #6c6c6c;"></div>
<div class="t" style="left:743.8px;top:587px;font-size:14.7px;color:#303030;">Gültig bis</div>
<svg class="r" style="left:822.4px;top:582.6px;" width="22" height="22" viewBox="0 0 24 24"><path d="M19 3h-1V1h-2v2H8V1H6v2H5c-1.11 0-1.99.9-1.99 2L3 19c0 1.1.89 2 2 2h14c1.1 0 2-.9 2-2V5c0-1.1-.9-2-2-2zm0 16H5V8h14v11zM7 10h5v5H7z" fill="#6f6f6f"/></svg>
<div class="r" style="left:868.5px;top:605.0px;width:109.5px;height:1.0px;background:#e4e4e4;"></div>
<svg class="r" style="left:961.3px;top:580.6px;" width="19" height="19" viewBox="0 0 24 24"><path d="M7 10l5 5 5-5z" fill="#757575"/></svg>
<div class="r" style="left:814.0px;top:633.0px;width:107.0px;height:32.7px;background:#177cc5;border-radius:2px;box-shadow:0 1px 3px rgba(0,0,0,.2);"></div>
<div class="t" style="left:822.0px;top:644px;font-size:12.8px;color:#d3f0ff;-webkit-text-stroke:0.55px #d3f0ff;">ÜBERNEHMEN</div>
<div class="r" style="left:934.8px;top:633.0px;width:96.8px;height:32.7px;background:#f7f7f7;border-radius:2px;box-shadow:0 1px 4px rgba(0,0,0,.25),0 0 1px rgba(0,0,0,.15);"></div>
<div class="t" style="left:942.8px;top:644px;font-size:12.9px;color:#222;-webkit-text-stroke:0.5px #222;">ABBRECHEN</div>
</body></html>
